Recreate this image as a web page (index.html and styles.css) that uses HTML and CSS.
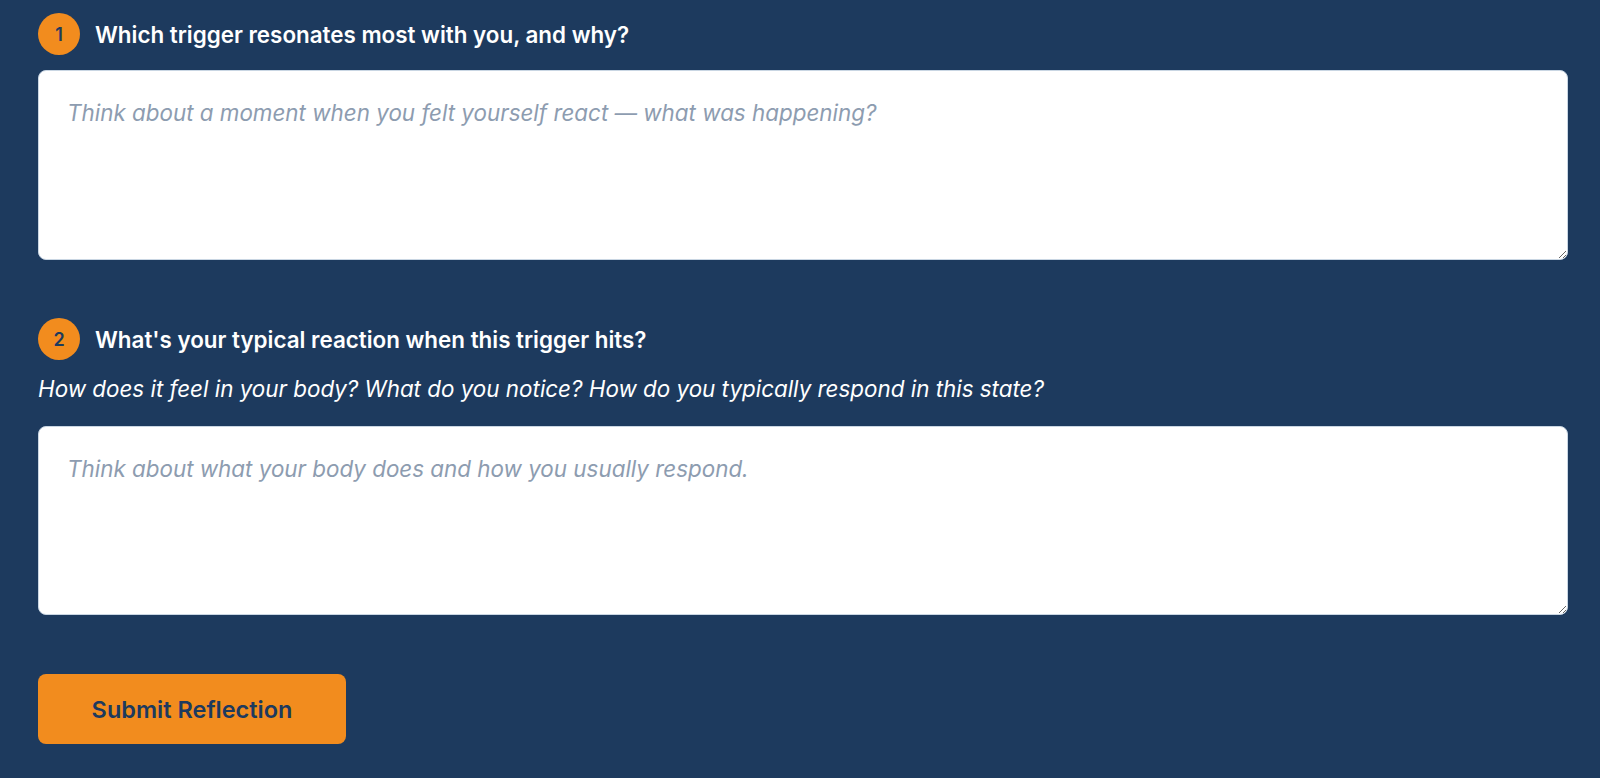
FILE: index.html
```html
<!DOCTYPE html>
<html lang="en">
<head>
<meta charset="utf-8">
<title>Reflection</title>
<link rel="stylesheet" href="styles.css">
</head>
<body>
<main class="page">
  <section class="question q1">
    <div class="q-head">
      <span class="num">1</span>
      <h2 class="q-title">Which trigger resonates most with you, and why?</h2>
    </div>
    <textarea class="answer" placeholder="Think about a moment when you felt yourself react — what was happening?"></textarea>
  </section>
  <section class="question q2">
    <div class="q-head">
      <span class="num">2</span>
      <h2 class="q-title">What's your typical reaction when this trigger hits?</h2>
    </div>
    <p class="q-sub">How does it feel in your body? What do you notice? How do you typically respond in this state?</p>
    <textarea class="answer" placeholder="Think about what your body does and how you usually respond."></textarea>
  </section>
  <button class="submit" type="button">Submit Reflection</button>
</main>
</body>
</html>
```
FILE: styles.css
```css
* { box-sizing: border-box; }
html, body {
  margin: 0;
  padding: 0;
  background: #1d3a5e;
  font-family: Inter, "Noto Sans", "Liberation Sans", sans-serif;
}
.page {
  display: flex;
  flex-direction: column;
  align-items: flex-start;
  padding: 13px 32px 40px 38px;
  min-height: 778px;
}
.question {
  width: 100%;
  display: flex;
  flex-direction: column;
}
.q1 { margin-bottom: 58px; }
.q2 { margin-bottom: 59px; }
.q-head {
  display: flex;
  align-items: center;
  gap: 15px;
  height: 42px;
}
.num {
  width: 42px;
  height: 42px;
  border-radius: 50%;
  background: #f28c1e;
  color: #1d3a5e;
  font-weight: 600;
  font-size: 18px;
  display: flex;
  align-items: center;
  justify-content: center;
  flex: none;
}
.q-title {
  margin: 0;
  color: #ffffff;
  font-size: 22.4px;
  font-weight: 600;
}
.q-sub {
  margin: 15px 0 0 0;
  color: #ffffff;
  font-style: italic;
  font-size: 22.4px;
  line-height: 28px;
}
.answer {
  display: block;
  width: 100%;
  height: 190px;
  margin-top: 15px;
  padding: 26px 28px 22px;
  border: 1px solid #c9d6e3;
  border-radius: 8px;
  background: #ffffff;
  font-family: Inter, "Noto Sans", "Liberation Sans", sans-serif;
  font-size: 22.4px;
  line-height: 32px;
  color: #1d3a5e;
  resize: vertical;
  outline: none;
}
.q2 .answer { margin-top: 23px; height: 189px; }
.answer::placeholder {
  color: #8d9cb0;
  font-style: italic;
}
.submit {
  width: 308px;
  height: 70px;
  border: none;
  border-radius: 8px;
  background: #f28c1e;
  color: #1d3a5e;
  font-family: Inter, "Noto Sans", "Liberation Sans", sans-serif;
  font-size: 23.5px;
  font-weight: 600;
  cursor: pointer;
}
```
